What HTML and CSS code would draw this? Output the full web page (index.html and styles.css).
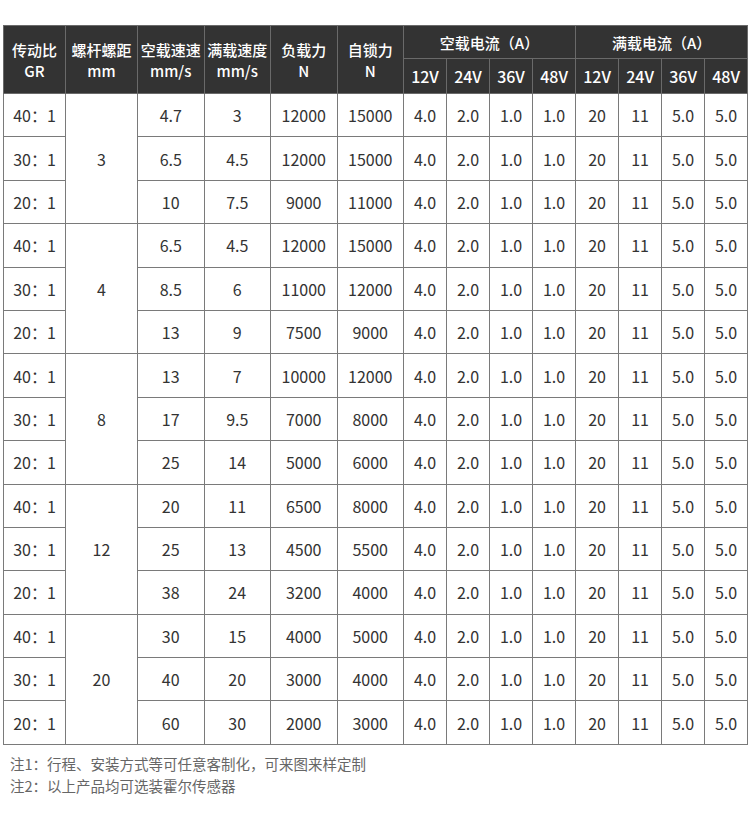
FILE: index.html
```html
<!DOCTYPE html>
<html lang="zh-CN">
<head>
<meta charset="utf-8">
<title>参数表</title>
<link rel="stylesheet" href="styles.css">
</head>
<body>
<div class="page">
<table class="spec">
<colgroup>
<col class="c-gr"><col class="c-pitch"><col class="c-mid"><col class="c-mid"><col class="c-mid"><col class="c-mid">
<col class="c-v"><col class="c-v"><col class="c-v"><col class="c-v"><col class="c-v"><col class="c-v"><col class="c-v"><col class="c-v">
</colgroup>
<thead>
<tr class="h1">
<th rowspan="2">传动比<br>GR</th>
<th rowspan="2">螺杆螺距<br>mm</th>
<th rowspan="2">空载速速<br>mm/s</th>
<th rowspan="2">满载速度<br>mm/s</th>
<th rowspan="2">负载力<br>N</th>
<th rowspan="2">自锁力<br>N</th>
<th colspan="4">空载电流（A）</th>
<th colspan="4">满载电流（A）</th>
</tr>
<tr class="h2">
<th>12V</th><th>24V</th><th>36V</th><th>48V</th>
<th>12V</th><th>24V</th><th>36V</th><th>48V</th>
</tr>
</thead>
<tbody>
<tr><td>40：1</td><td rowspan="3">3</td><td>4.7</td><td>3</td><td>12000</td><td>15000</td><td>4.0</td><td>2.0</td><td>1.0</td><td>1.0</td><td>20</td><td>11</td><td>5.0</td><td>5.0</td></tr>
<tr><td>30：1</td><td>6.5</td><td>4.5</td><td>12000</td><td>15000</td><td>4.0</td><td>2.0</td><td>1.0</td><td>1.0</td><td>20</td><td>11</td><td>5.0</td><td>5.0</td></tr>
<tr><td>20：1</td><td>10</td><td>7.5</td><td>9000</td><td>11000</td><td>4.0</td><td>2.0</td><td>1.0</td><td>1.0</td><td>20</td><td>11</td><td>5.0</td><td>5.0</td></tr>
<tr><td>40：1</td><td rowspan="3">4</td><td>6.5</td><td>4.5</td><td>12000</td><td>15000</td><td>4.0</td><td>2.0</td><td>1.0</td><td>1.0</td><td>20</td><td>11</td><td>5.0</td><td>5.0</td></tr>
<tr><td>30：1</td><td>8.5</td><td>6</td><td>11000</td><td>12000</td><td>4.0</td><td>2.0</td><td>1.0</td><td>1.0</td><td>20</td><td>11</td><td>5.0</td><td>5.0</td></tr>
<tr><td>20：1</td><td>13</td><td>9</td><td>7500</td><td>9000</td><td>4.0</td><td>2.0</td><td>1.0</td><td>1.0</td><td>20</td><td>11</td><td>5.0</td><td>5.0</td></tr>
<tr><td>40：1</td><td rowspan="3">8</td><td>13</td><td>7</td><td>10000</td><td>12000</td><td>4.0</td><td>2.0</td><td>1.0</td><td>1.0</td><td>20</td><td>11</td><td>5.0</td><td>5.0</td></tr>
<tr><td>30：1</td><td>17</td><td>9.5</td><td>7000</td><td>8000</td><td>4.0</td><td>2.0</td><td>1.0</td><td>1.0</td><td>20</td><td>11</td><td>5.0</td><td>5.0</td></tr>
<tr><td>20：1</td><td>25</td><td>14</td><td>5000</td><td>6000</td><td>4.0</td><td>2.0</td><td>1.0</td><td>1.0</td><td>20</td><td>11</td><td>5.0</td><td>5.0</td></tr>
<tr><td>40：1</td><td rowspan="3">12</td><td>20</td><td>11</td><td>6500</td><td>8000</td><td>4.0</td><td>2.0</td><td>1.0</td><td>1.0</td><td>20</td><td>11</td><td>5.0</td><td>5.0</td></tr>
<tr><td>30：1</td><td>25</td><td>13</td><td>4500</td><td>5500</td><td>4.0</td><td>2.0</td><td>1.0</td><td>1.0</td><td>20</td><td>11</td><td>5.0</td><td>5.0</td></tr>
<tr><td>20：1</td><td>38</td><td>24</td><td>3200</td><td>4000</td><td>4.0</td><td>2.0</td><td>1.0</td><td>1.0</td><td>20</td><td>11</td><td>5.0</td><td>5.0</td></tr>
<tr><td>40：1</td><td rowspan="3">20</td><td>30</td><td>15</td><td>4000</td><td>5000</td><td>4.0</td><td>2.0</td><td>1.0</td><td>1.0</td><td>20</td><td>11</td><td>5.0</td><td>5.0</td></tr>
<tr><td>30：1</td><td>40</td><td>20</td><td>3000</td><td>4000</td><td>4.0</td><td>2.0</td><td>1.0</td><td>1.0</td><td>20</td><td>11</td><td>5.0</td><td>5.0</td></tr>
<tr><td>20：1</td><td>60</td><td>30</td><td>2000</td><td>3000</td><td>4.0</td><td>2.0</td><td>1.0</td><td>1.0</td><td>20</td><td>11</td><td>5.0</td><td>5.0</td></tr>
</tbody>
</table>
<div class="notes">
<p>注1：行程、安装方式等可任意客制化，可来图来样定制</p>
<p>注2：以上产品均可选装霍尔传感器</p>
</div>
</div>
</body>
</html>
```

FILE: styles.css
```css
html, body {
  margin: 0;
  padding: 0;
  background: #ffffff;
}

body {
  font-family: "Noto Sans CJK SC", "Noto Sans", sans-serif;
  color: #333333;
}

.page {
  padding: 25px 2px 0 3px;
}

.spec {
  width: 745px;
  table-layout: fixed;
  border-collapse: collapse;
}

.c-gr { width: 62px; }
.c-pitch { width: 72px; }
.c-mid { width: 66.5px; }
.c-v { width: 43px; }

.spec th {
  background: #333333;
  color: #ffffff;
  font-weight: 500;
  font-size: 15px;
  line-height: 21px;
  border: 1px solid #6a6a6a;
  padding: 0;
  text-align: center;
  vertical-align: middle;
}

.spec .h1 th {
  height: 32px;
}

.spec .h2 th {
  height: 34px;
  font-size: 16px;
}

.spec td {
  height: 42.4px;
  padding: 0;
  border: 1px solid #7a7a7a;
  text-align: center;
  vertical-align: middle;
  font-size: 16px;
  color: #333333;
}

.notes {
  padding: 8px 0 0 7px;
  font-size: 14.5px;
  line-height: 22px;
  color: #666666;
}

.notes p {
  margin: 0;
}
```
